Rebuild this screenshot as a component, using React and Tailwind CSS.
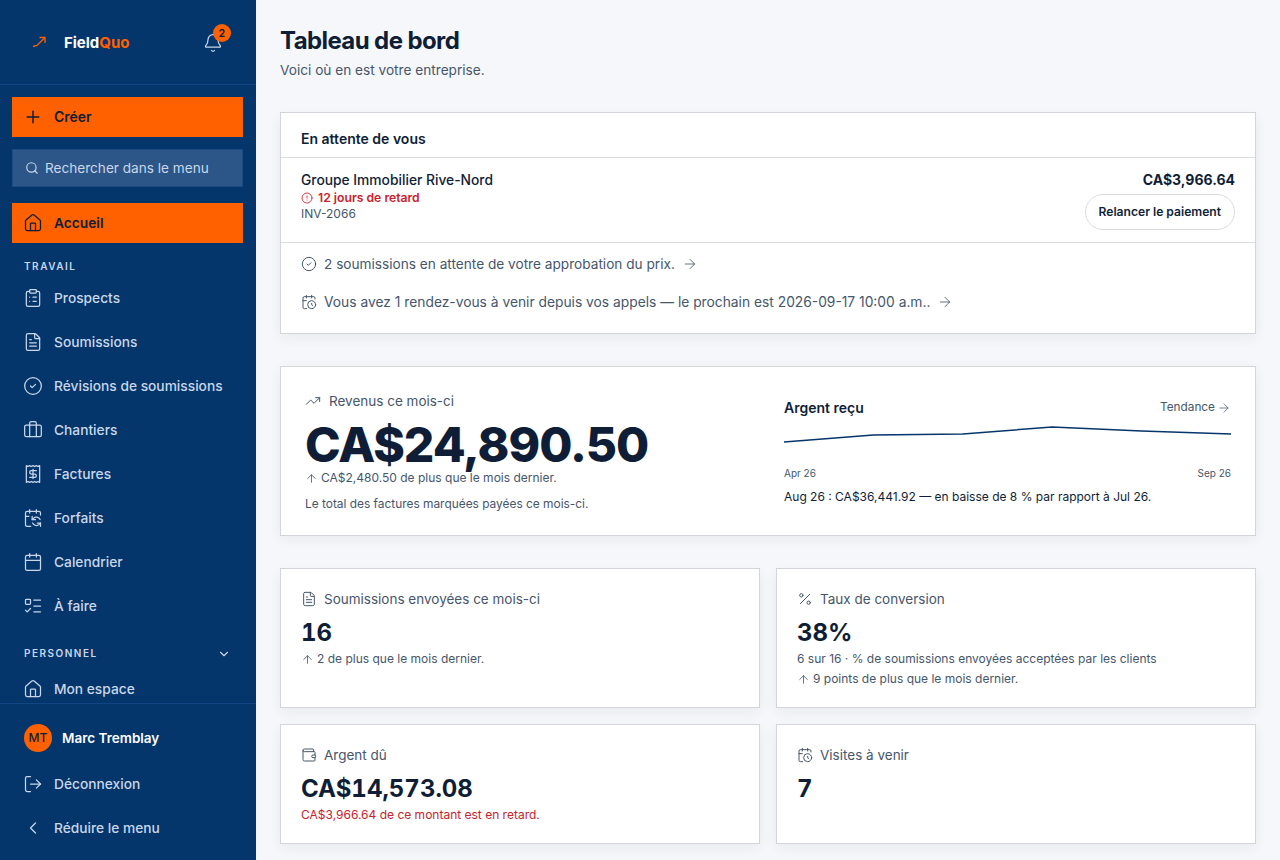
import React from 'react';
import {
  Plus, Search, Home, ClipboardList, FileText, CircleCheck, Briefcase, Receipt, CalendarSync,
  Calendar, ListTodo, ChevronDown, LogOut, ChevronLeft, Bell, CircleAlert, ArrowRight, CalendarClock,
  TrendingUp, ArrowUp, Percent, Wallet,
} from 'lucide-react';

const travail = [
  { label: 'Prospects', Icon: ClipboardList },
  { label: 'Soumissions', Icon: FileText },
  { label: 'Révisions de soumissions', Icon: CircleCheck },
  { label: 'Chantiers', Icon: Briefcase },
  { label: 'Factures', Icon: Receipt },
  { label: 'Forfaits', Icon: CalendarSync },
  { label: 'Calendrier', Icon: Calendar },
  { label: 'À faire', Icon: ListTodo },
];

function NavItem({ Icon, label }) {
  return (
    <div className="flex h-11 shrink-0 items-center gap-[11px] px-[11px] text-[13.75px] font-medium text-[#c9d7ea]">
      <Icon size={20} strokeWidth={1.5} />
      <span>{label}</span>
    </div>
  );
}

function Sidebar() {
  return (
    <aside className="flex h-[860px] w-64 shrink-0 flex-col bg-[#04356b]">
      <div className="flex h-[85px] shrink-0 items-center justify-between border-b border-[#124583] pl-[32px] pr-[33px]">
        <div className="flex items-center gap-[18px]">
          <svg width="14" height="12" viewBox="0 0 14 12" fill="none" stroke="#ff6000" strokeWidth="1.3">
            <path d="M1 10.5 L5 9.5 L12.5 2" />
            <path d="M7.5 1.5 H13 V7" />
          </svg>
          <span className="pt-[2px] text-[15px] font-bold text-white">Field<span className="text-[#ff6000]">Quo</span></span>
        </div>
        <div className="relative mt-[2px]">
          <Bell size={20} strokeWidth={1.5} className="text-[#c9d7ea]" />
          <span className="absolute -right-[8px] -top-[9px] flex h-[18px] w-[18px] items-center justify-center rounded-full bg-[#ff6000] text-[10px] font-bold text-[#0f1e36]">2</span>
        </div>
      </div>
      <div className="flex shrink-0 flex-col gap-3 pl-3 pr-[13px] pt-3">
        <div className="flex h-10 items-center gap-[11px] bg-[#ff6000] px-[11px] text-sm font-semibold text-[#0f1e36]">
          <Plus size={20} strokeWidth={1.75} />
          <span>Créer</span>
        </div>
        <div className="flex h-[38px] items-center gap-[6px] border border-[#1e4a85] bg-[#2d5688] px-3 text-[13.6px] text-[#c9d7ea]">
          <Search size={14} />
          <span>Rechercher dans le menu</span>
        </div>
      </div>
      <div className="min-h-0 flex-1 overflow-hidden pl-3 pr-[13px] pt-4">
        <div className="flex h-10 items-center gap-[11px] bg-[#ff6000] px-[11px] text-[13.75px] font-semibold text-[#0f1e36]">
          <Home size={20} strokeWidth={1.5} />
          <span>Accueil</span>
        </div>
        <div className="px-3 pb-[2px] pt-4 text-[10px] font-semibold tracking-[0.15em] text-[#c9d7ea]">TRAVAIL</div>
        {travail.map((item) => <NavItem key={item.label} {...item} />)}
        <div className="flex items-center justify-between px-3 pb-[6px] pt-[18px] text-[10px] font-semibold tracking-[0.15em] text-[#c9d7ea]">
          <span>PERSONNEL</span>
          <ChevronDown size={14} />
        </div>
        <NavItem Icon={Home} label="Mon espace" />
      </div>
      <div className="shrink-0 border-t border-[#124583] pb-[10px] pl-3 pr-[13px] pt-5">
        <div className="mb-[10px] flex h-7 items-center gap-2.5 px-3">
          <span className="flex h-7 w-7 items-center justify-center rounded-full bg-[#ff6000] text-xs font-medium text-[#0f1e36]">MT</span>
          <span className="text-[13.5px] font-semibold text-white">Marc Tremblay</span>
        </div>
        <NavItem Icon={LogOut} label="Déconnexion" />
        <NavItem Icon={ChevronLeft} label="Réduire le menu" />
      </div>
    </aside>
  );
}

function Stat({ Icon, label, value, children }) {
  return (
    <div className="border border-[#d2d6dc] bg-white px-5 pb-[18px] pt-5 shadow-[0_4px_12px_rgba(15,30,54,0.06)]">
      <div className="flex h-5 items-center gap-[7px] text-[13.5px] text-[#46566b]">
        <Icon size={16} strokeWidth={1.5} />
        <span>{label}</span>
      </div>
      <div className="mt-2 text-2xl font-bold tabular-nums text-[#0f1e36]">{value}</div>
      <div className="text-xs leading-5 text-[#46566b]">{children}</div>
    </div>
  );
}

export default function App() {
  return (
    <div className="flex h-[860px] overflow-hidden bg-[#f6f7fa] font-['Inter',sans-serif]">
      <Sidebar />
      <main className="flex-1 overflow-hidden px-6 pt-[25px]">
        <h1 className="text-2xl font-bold tracking-tight text-[#0f1e36]">Tableau de bord</h1>
        <p className="mt-[3px] text-[13.65px] leading-5 text-[#46566b]">Voici où en est votre entreprise.</p>

        <section className="mt-8 border border-[#d2d6dc] bg-white shadow-[0_4px_12px_rgba(15,30,54,0.06)]">
          <div className="border-b border-[#d9dce1] px-5 pb-2 pt-4 text-sm font-semibold leading-5 text-[#0f1e36]">En attente de vous</div>
          <div className="flex items-start justify-between border-b border-[#d9dce1] px-5 pb-3 pt-3">
            <div>
              <div className="text-[13.8px] font-medium leading-5 text-[#0f1e36]">Groupe Immobilier Rive-Nord</div>
              <div className="flex h-4 items-center gap-[5px] text-[12.2px] font-semibold text-[#c8232a]">
                <CircleAlert size={12} strokeWidth={1.75} />
                <span>12 jours de retard</span>
              </div>
              <div className="text-xs leading-4 text-[#46566b]">INV-2066</div>
            </div>
            <div className="flex flex-col items-end gap-1">
              <div className="text-sm font-bold leading-5 text-[#0f1e36]">CA$3,966.64</div>
              <div className="flex h-9 items-center rounded-full border border-[#d9dce1] px-[13px] text-[12.1px] font-semibold text-[#0f1e36]">Relancer le paiement</div>
            </div>
          </div>
          <div className="flex flex-col gap-[18px] px-5 pb-[21px] pt-[11px] text-[#46566b]">
            <div className="flex h-5 items-center gap-[7px] text-[13.65px]">
              <CircleCheck size={16} strokeWidth={1.5} />
              <span>2 soumissions en attente de votre approbation du prix.</span>
              <ArrowRight size={16} strokeWidth={1.25} />
            </div>
            <div className="flex h-5 items-center gap-[7px] text-[13.8px]">
              <CalendarClock size={16} strokeWidth={1.5} />
              <span>Vous avez 1 rendez-vous à venir depuis vos appels — le prochain est 2026-09-17 10:00 a.m..</span>
              <ArrowRight size={16} strokeWidth={1.25} />
            </div>
          </div>
        </section>

        <section className="mt-8 grid h-[170px] grid-cols-[479px_1fr] border border-[#d2d6dc] bg-white px-6 pt-6 shadow-[0_4px_12px_rgba(15,30,54,0.06)]">
          <div>
            <div className="flex h-5 items-center gap-2 text-[13.5px] text-[#46566b]">
              <TrendingUp size={16} strokeWidth={1.5} />
              <span>Revenus ce mois-ci</span>
            </div>
            <div className="mt-[9px] text-5xl font-extrabold leading-[50px] tracking-[-1px] text-[#0f1e36]">CA$24,890.50</div>
            <div className="flex h-4 items-center gap-[3px] text-xs text-[#46566b]">
              <ArrowUp size={13} strokeWidth={1.5} />
              <span>CA$2,480.50 de plus que le mois dernier.</span>
            </div>
            <div className="mt-[10px] text-[11.9px] leading-4 text-[#46566b]">Le total des factures marquées payées ce mois-ci.</div>
          </div>
          <div className="pt-[7px]">
            <div className="flex h-5 items-center justify-between">
              <span className="text-sm font-semibold text-[#0f1e36]">Argent reçu</span>
              <span className="flex items-center gap-[2px] text-[11.8px] text-[#46566b]">Tendance <ArrowRight size={14} strokeWidth={1.25} /></span>
            </div>
            <svg className="mt-[7px] block" width="447" height="32" viewBox="0 0 447 32" fill="none">
              <path d="M0 17 L89.4 10 L178.8 9 L268.2 2 L357.6 6 L447 9" stroke="#04356b" strokeWidth="1.5" />
            </svg>
            <div className="mt-[9px] flex justify-between text-[10px] text-[#46566b]"><span>Apr 26</span><span>Sep 26</span></div>
            <div className="mt-2 text-xs leading-4 text-[#0f1e36]">Aug 26 : CA$36,441.92 — en baisse de 8 % par rapport à Jul 26.</div>
          </div>
        </section>

        <section className="mt-8 grid grid-cols-2 gap-4">
          <Stat Icon={FileText} label="Soumissions envoyées ce mois-ci" value="16">
            <span className="flex items-center gap-[3px]"><ArrowUp size={13} strokeWidth={1.5} />2 de plus que le mois dernier.</span>
          </Stat>
          <Stat Icon={Percent} label="Taux de conversion" value="38%">
            <span className="block">6 sur 16 · % de soumissions envoyées acceptées par les clients</span>
            <span className="flex items-center gap-[3px]"><ArrowUp size={13} strokeWidth={1.5} />9 points de plus que le mois dernier.</span>
          </Stat>
          <Stat Icon={Wallet} label="Argent dû" value="CA$14,573.08">
            <span className="text-[#c8232a]">CA$3,966.64 de ce montant est en retard.</span>
          </Stat>
          <Stat Icon={CalendarClock} label="Visites à venir" value="7" />
        </section>
      </main>
    </div>
  );
}
